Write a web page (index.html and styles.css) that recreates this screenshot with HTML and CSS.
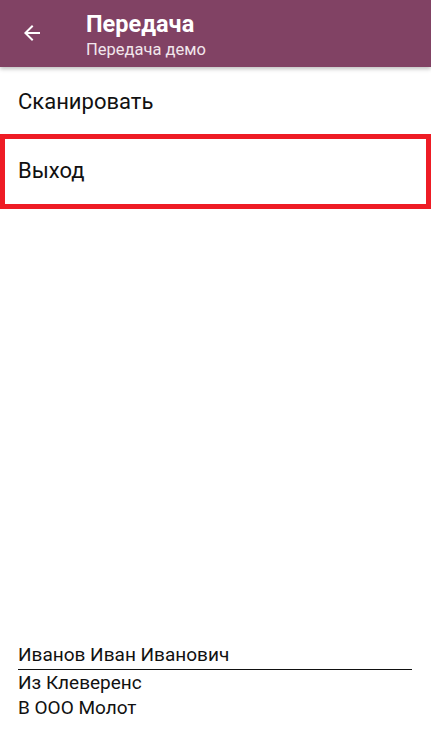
FILE: index.html
```html
<!DOCTYPE html>
<html lang="ru">
<head>
<meta charset="utf-8">
<link rel="stylesheet" href="styles.css">
</head>
<body>
<div class="screen">
  <header class="toolbar">
    <div class="back">
      <svg width="24" height="24" viewBox="0 0 24 24"><path d="M20 11H7.83l5.59-5.59L12 4l-8 8 8 8 1.41-1.41L7.83 13H20v-2z" fill="#ffffff"/></svg>
    </div>
    <div class="titles">
      <div class="title">Передача</div>
      <div class="subtitle">Передача демо</div>
    </div>
  </header>
  <main class="menu">
    <div class="item first">Сканировать</div>
    <div class="item selected">Выход</div>
  </main>
  <footer class="info">
    <div class="user">Иванов Иван Иванович</div>
    <div class="line">Из Клеверенс</div>
    <div class="line">В ООО Молот</div>
  </footer>
</div>
</body>
</html>
```
FILE: styles.css
```css
* { box-sizing: border-box; }
html, body { margin: 0; padding: 0; background: #ffffff; }
body { font-family: Roboto, "Noto Sans", sans-serif; color: #111111; }
.screen { width: 431px; height: 739px; display: flex; flex-direction: column; }
.toolbar {
  height: 67px;
  background: #814264;
  display: flex;
  align-items: stretch;
  box-shadow: 0 2px 4px rgba(0,0,0,0.25);
  position: relative;
  z-index: 1;
}
.back { width: 86px; display: flex; align-items: center; padding-left: 20px; padding-bottom: 2px; }
.titles { display: flex; flex-direction: column; padding-top: 9px; color: #ffffff; }
.title { font-size: 23.5px; font-weight: 700; line-height: 30px; }
.subtitle { font-size: 16.5px; line-height: 22px; color: #f1e6ec; }
.menu { display: flex; flex-direction: column; padding-top: 0; }
.item { font-size: 22px; height: 67px; display: flex; align-items: center; padding-left: 18px; color: #111; }
.item.first { padding-top: 2px; }
.item.selected { height: 75px; border: 5px solid #ee1c25; padding-left: 13px; padding-bottom: 2px; }
.info { margin-top: auto; padding: 0 19px 19px 18px; font-size: 19px; }
.user { border-bottom: 1.5px solid #111; padding-bottom: 2px; line-height: 25px; }
.line { line-height: 25px; }
```
